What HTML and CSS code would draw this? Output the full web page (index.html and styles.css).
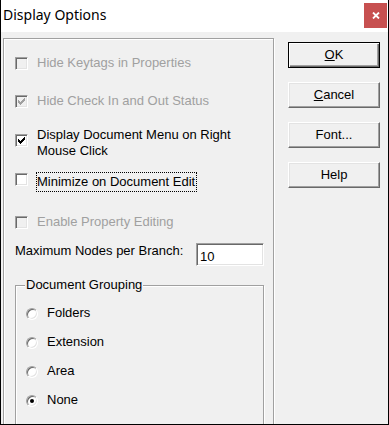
FILE: index.html
```html
<!DOCTYPE html>
<html lang="en">
<head>
    <meta charset="UTF-8">
    <title>Display Options</title>
    <link rel="stylesheet" href="styles.css">
</head>
<body>

<div class="window">
    <div class="titlebar">
        <span class="title">Display Options</span>
        <span class="close">
            <svg width="8" height="7" viewBox="0 0 8 7"><path d="M1 0.5 L7 6.5 M7 0.5 L1 6.5" stroke="#fff" stroke-width="1.8" fill="none"/></svg>
        </span>
    </div>

    <div class="content">
        <div class="frame">
            <div class="check disabled row-keytags">
                <span class="box"></span>
                <span class="label">Hide Keytags in Properties</span>
            </div>
            <div class="check disabled row-status">
                <span class="box">
                    <svg width="7" height="7" viewBox="0 0 7 7" fill="currentColor"><path d="M0 2h1v3H0zM1 3h1v3H1zM2 4h1v3H2zM3 3h1v3H3zM4 2h1v3H4zM5 1h1v3H5zM6 0h1v3H6z"/></svg>
                </span>
                <span class="label">Hide Check In and Out Status</span>
            </div>
            <div class="check row-menu">
                <span class="box">
                    <svg width="7" height="7" viewBox="0 0 7 7" fill="currentColor"><path d="M0 2h1v3H0zM1 3h1v3H1zM2 4h1v3H2zM3 3h1v3H3zM4 2h1v3H4zM5 1h1v3H5zM6 0h1v3H6z"/></svg>
                </span>
                <span class="label">Display Document Menu on Right<br>Mouse Click</span>
            </div>
            <div class="check row-minimize">
                <span class="box"></span>
                <span class="label focus">Minimize on Document Edit</span>
            </div>
            <div class="check disabled row-editing">
                <span class="box"></span>
                <span class="label">Enable Property Editing</span>
            </div>

            <div class="nodes">
                <span class="nodes-label">Maximum Nodes per Branch:</span>
                <input type="text" value="10">
            </div>

            <fieldset class="group">
                <legend>Document Grouping</legend>
                <div class="option"><span class="radio"></span><span class="label">Folders</span></div>
                <div class="option"><span class="radio"></span><span class="label">Extension</span></div>
                <div class="option"><span class="radio"></span><span class="label">Area</span></div>
                <div class="option"><span class="radio on"></span><span class="label">None</span></div>
            </fieldset>
        </div>

        <div class="buttons">
            <button class="btn default"><u>O</u>K</button>
            <button class="btn"><u>C</u>ancel</button>
            <button class="btn">Font...</button>
            <button class="btn">Help</button>
        </div>
    </div>
</div>

</body>
</html>
```

FILE: styles.css
```css
* {
    box-sizing: border-box;
}
body {
    margin: 0;
    font-family: "Liberation Sans", Arial, sans-serif;
    font-size: 13px;
    line-height: 16px;
    color: #000;
    background-color: #fff;
}
.window {
    width: 389px;
    height: 425px;
    border: 1px solid #000;
    border-top: none;
    background-color: #f0f0f0;
    display: flex;
    flex-direction: column;
    overflow: hidden;
}
.titlebar {
    height: 32px;
    flex: none;
    background-color: #fff;
    display: flex;
    justify-content: space-between;
    align-items: flex-start;
    padding: 0 1px 0 2px;
}
.title {
    font-family: "Noto Sans", sans-serif;
    font-size: 14px;
    line-height: 20px;
    padding-top: 5px;
}
.close {
    width: 23px;
    height: 25px;
    margin-top: 3px;
    background-color: #c75050;
    display: flex;
    align-items: center;
    justify-content: center;
}
.content {
    flex: 1;
    display: flex;
    align-items: flex-start;
    gap: 14px;
    padding: 6px 0 0 2px;
}
.frame {
    width: 271px;
    flex: none;
    display: flex;
    flex-direction: column;
    border: 1px solid #a0a0a0;
    box-shadow: inset 1px 1px #fff, 1px 1px #fff;
    padding: 0 9px 20px 11px;
}

/* checkboxes */
.check {
    display: flex;
    align-items: flex-start;
}
.box {
    width: 13px;
    height: 13px;
    flex: none;
    margin-top: 2px;
    border: 1px solid;
    border-color: #a0a0a0 #fff #fff #a0a0a0;
    box-shadow: inset 1px 1px #696969, inset -1px -1px #e3e3e3;
    background-color: #fff;
    color: #000;
    display: flex;
    align-items: center;
    justify-content: center;
}
.check .label {
    margin-left: 9px;
}
.disabled {
    color: #a0a0a0;
}
.disabled .box {
    background-color: #f0f0f0;
    color: #a0a0a0;
}
.row-keytags { margin-top: 16px; }
.row-status { margin-top: 22px; }
.row-menu { margin-top: 18px; }
.row-menu .box { margin-top: 7px; }
.row-minimize { margin-top: 13px; }
.row-minimize .box { margin-top: 1px; }
.row-editing { margin-top: 22px; }
.check .focus {
    margin-left: 8px;
    border: 1px dotted #000;
    padding: 1px 1px 1px 0;
}

/* max nodes */
.nodes {
    display: flex;
    align-items: flex-start;
    margin-top: 13px;
}
.nodes-label {
    white-space: nowrap;
}
.nodes input {
    width: 68px;
    height: 23px;
    flex: none;
    margin-left: auto;
    font: inherit;
    line-height: 16px;
    padding: 4px 3px 0 3px;
    border: 1px solid;
    border-color: #a0a0a0 #fff #fff #a0a0a0;
    box-shadow: inset 1px 1px #696969, inset -1px -1px #e3e3e3;
    background-color: #fff;
    outline: none;
}

/* grouping */
.group {
    margin: 11px 0 0;
    min-inline-size: 0;
    height: 160px;
    border: 1px solid #a0a0a0;
    box-shadow: inset 1px 1px #fff, 1px 1px #fff;
    padding: 12px 0 0 10px;
    display: flex;
    flex-direction: column;
    gap: 13px;
}
.group legend {
    padding: 0 1px;
    margin-left: -1px;
    background-color: #f0f0f0;
    line-height: 16px;
}
.option {
    display: flex;
    align-items: flex-start;
}
.radio {
    width: 12px;
    height: 12px;
    flex: none;
    margin-top: 3px;
    border-radius: 50%;
    border: 1px solid;
    border-color: #a0a0a0 #fff #fff #a0a0a0;
    box-shadow: inset 1px 1px #696969, inset -1px -1px #e3e3e3;
    background-color: #fff;
    display: flex;
    align-items: center;
    justify-content: center;
}
.radio.on::after {
    content: "";
    width: 4px;
    height: 4px;
    border-radius: 50%;
    background-color: #000;
}
.option .label {
    margin-left: 9px;
}

/* buttons */
.buttons {
    width: 92px;
    flex: none;
    display: flex;
    flex-direction: column;
    gap: 14px;
    margin-top: 4px;
}
.btn {
    height: 26px;
    padding: 0;
    font: inherit;
    color: #000;
    background-color: #f0f0f0;
    border: 1px solid;
    border-color: #fff #696969 #696969 #fff;
    box-shadow: inset -1px -1px #a0a0a0, inset 1px 1px #e3e3e3;
}
.btn.default {
    border-color: #000;
    box-shadow: inset 1px 1px #fff, inset -1px -1px #696969, inset -2px -2px #a0a0a0;
}
```
